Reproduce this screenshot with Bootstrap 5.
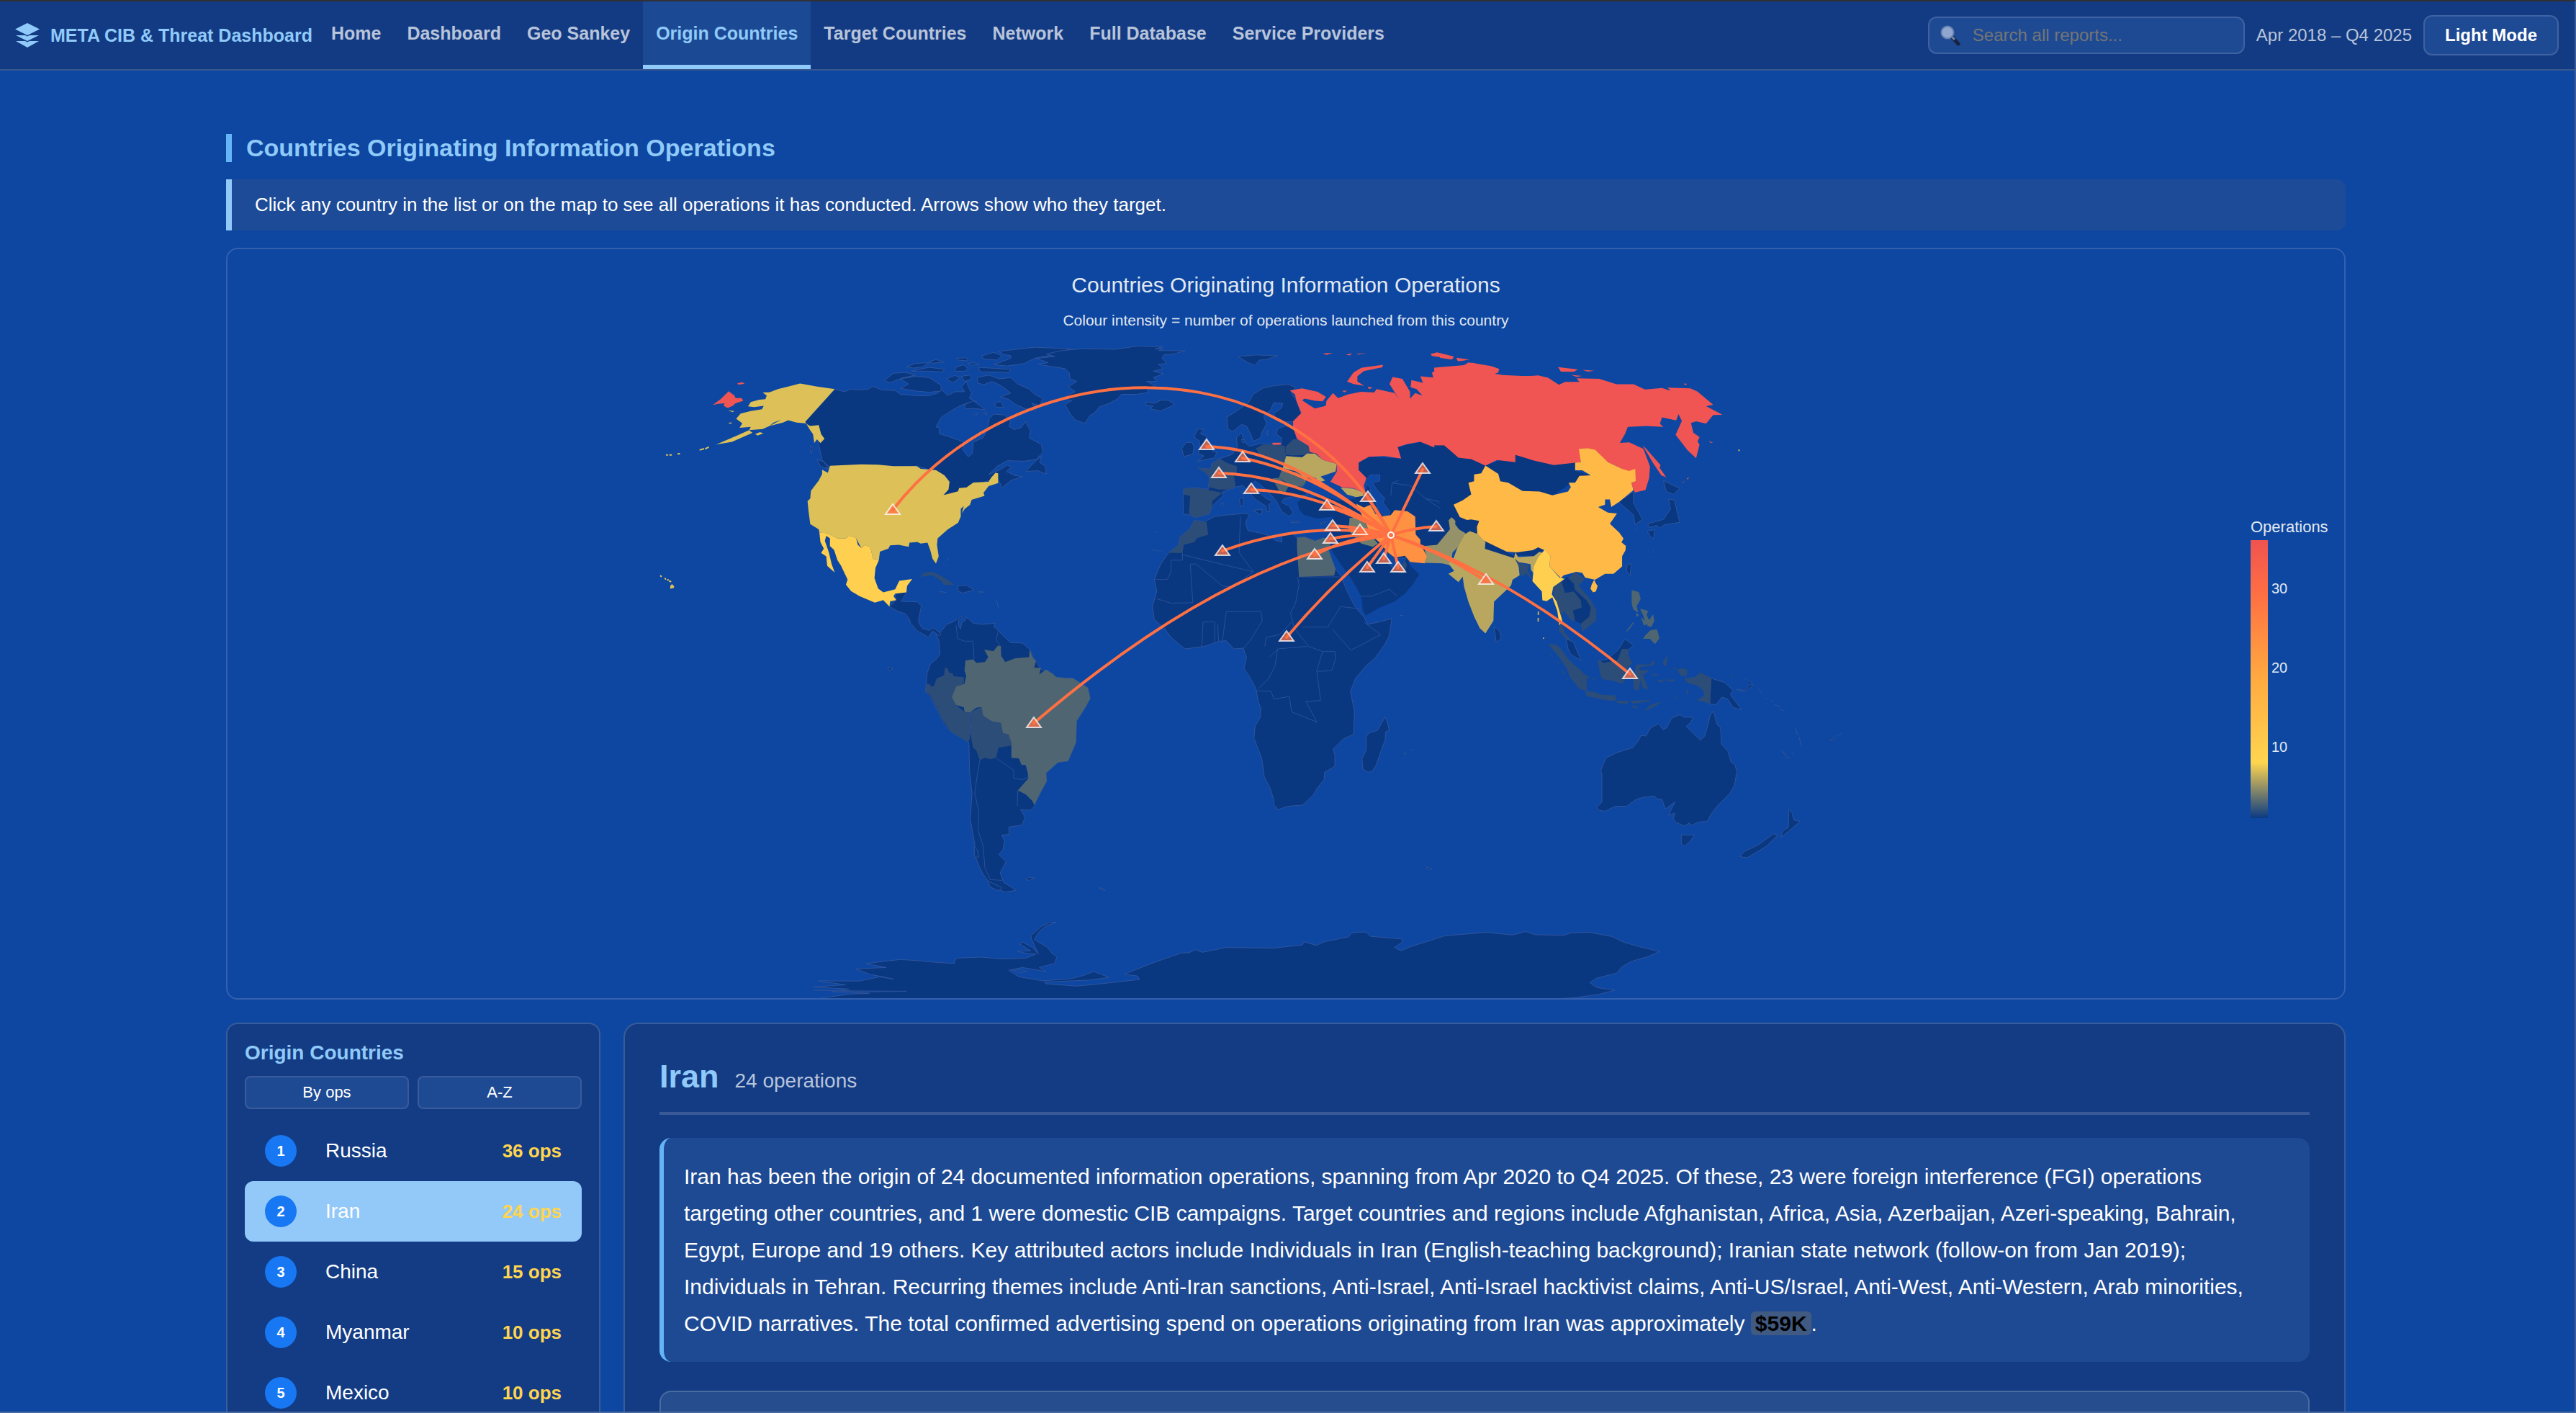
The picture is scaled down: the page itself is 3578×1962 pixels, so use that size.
<!DOCTYPE html>
<html lang="en">
<head>
<meta charset="utf-8">
<meta name="viewport" content="width=device-width, initial-scale=1">
<title>META CIB &amp; Threat Dashboard</title>
<link rel="stylesheet" href="https://cdn.jsdelivr.net/npm/bootstrap@5.3.0/dist/css/bootstrap.min.css">
<style>
:root{--sky:#90caf9;--panel:#133c85;--field:#1e4a94;--line:rgba(255,255,255,.17);--gold:#ffd54f}
body{background:#0d47a1;color:#fff;font-family:"Liberation Sans",Arial,sans-serif;font-size:28px;line-height:32px}
.frame{height:100vh;overflow:hidden;border-top:2px solid #303036;border-right:2px solid #3c5c96;border-bottom:2px solid #4a6a9f}
.topbar{background:#133b83;border-bottom:2px solid #38568f;min-height:96px;padding:0 22px 0 20px;font-size:24px}
.brand{color:var(--sky);font-size:25px;font-weight:700;text-decoration:none;gap:14px;padding-right:8px}
.brand svg{width:36px;height:36px}
.tabs .nav-link{display:flex;align-items:center;height:94px;padding:0 18px;border-bottom:6px solid transparent;color:#b8c4da;font-size:25px;font-weight:700}
.tabs .nav-link:hover,.tabs .nav-link.active{color:var(--sky)}
.tabs .nav-link.active{background:#1c4994;border-bottom-color:var(--sky)}
.finder{background:var(--field);border:2px solid #3f62a2;border-radius:12px;width:440px;height:52px;padding:0 14px;gap:14px}
.finder svg{width:30px;height:30px;flex:none}
.finder input{background:none;border:0;outline:0;color:#fff;font-size:24px;width:100%;min-width:0}
.finder input::placeholder{color:#757575;opacity:1}
.period{color:#b8c4da}
.mode{background:var(--field);border:2px solid #3f62a2;border-radius:12px;color:#fff;height:56px;padding:0 28px;font-size:24px;font-weight:700;line-height:28px}
.page{padding:88px 32px 0 28px;overflow-y:auto;scrollbar-width:none}
.wrap{max-width:2944px;margin:0 auto}
.heading{border-left:8px solid #64b5f6;color:var(--sky);font-size:34px;line-height:39px;font-weight:700;padding-left:20px;margin:0 0 24px}
.hint{background:#1e4b97;border-left:8px solid var(--sky);border-radius:0 12px 12px 0;font-size:26px;line-height:31px;padding:20px 32px;margin:0 0 24px}
.mapbox{border:2px solid #3560ae;border-radius:16px;overflow:hidden;margin-bottom:32px}
.mapbox svg{display:block;width:100%;height:auto}
.mapbox text{font-family:"Liberation Sans",Arial,sans-serif;fill:#e2e8f2}
.mapbox path{vector-effect:non-scaling-stroke}
.land{fill:#093780;stroke:#2f559d;stroke-width:1}
.flat{fill:#093780}.border-lines{fill:none;stroke:#2a509a;stroke-width:1}
.sea{fill:#0d47a1;stroke:#2a509a;stroke-width:1}
.c1{fill:#2d4d79}.c2{fill:#4f6672}.c3{fill:#717c6d}.c4{fill:#959168}.c5{fill:#b9a760}.c6{fill:#ddc158}.c7{fill:#ffd04f}.c8{fill:#ffb946}.c9{fill:#ff9142}.c10{fill:#f15553}
.dots{fill:none;stroke-width:2;stroke-dasharray:5 4}
.specks{fill:none;stroke:#ddc158;stroke-width:2;stroke-linecap:round}
.flows{fill:none;stroke:#ff7043;stroke-width:4;stroke-linecap:round}
.pins{fill:#ff7043;fill-opacity:.75;stroke:#fff;stroke-opacity:.75;stroke-width:2}
.side{flex:0 0 520px;background:var(--panel);border:2px solid var(--line);border-radius:16px;padding:24px}
.side h2{color:var(--sky);font-size:28px;line-height:32px;font-weight:700;margin:0 0 16px}
.sorter{background:var(--field);border:2px solid #3a5b9c;border-radius:8px;color:#fff;height:46px;font-size:22px;line-height:24px;padding:0}
.rows{padding:0;margin:16px 0 0;list-style:none}
.rowlink{height:84px;padding:0 28px;border-radius:12px;color:#fff;text-decoration:none}
.rowlink.active{background:#92c9f9}
.rank{width:44px;height:44px;border-radius:50%;background:#1877f2;font-size:20px;font-weight:700;margin-right:40px;flex:none}
.count{color:var(--gold);font-size:26px;font-weight:700}
.detail{background:var(--panel);border:2px solid var(--line);border-radius:20px;padding:48px;min-width:0}
.titleline{border-bottom:4px solid #3a5a97;padding-bottom:24px;margin-bottom:32px;gap:22px}
.titleline h2{color:var(--sky);font-size:45px;line-height:50px;font-weight:700;margin:0}
.titleline span{color:#b8c4da}
.summary{background:#1e4a94;border-left:6px solid #64b5f6;border-radius:16px;font-size:30px;line-height:51px;padding:28px;margin:0 0 40px}
.spend{display:inline-block;line-height:33px;background:#415a81;border-radius:6px;padding:0 6px;color:#000}
.nextbox{background:#264d8d;border:2px solid #4a6ba1;border-radius:16px;height:240px}
</style>
<script src="https://cdn.jsdelivr.net/npm/bootstrap@5.3.0/dist/js/bootstrap.bundle.min.js"></script>
</head>
<body>
<div class="frame d-flex flex-column">
<header class="topbar d-flex align-items-center flex-shrink-0">
  <a class="brand d-flex align-items-center" href="#">
    <svg viewBox="0 0 36 36" aria-hidden="true"><path fill="#90caf9" d="M18 1 35 9.500 18 18 1 9.500zM2 18h13l3 1.500 3-1.500h13l-16 8zM2 26h13l3 1.500 3-1.500h13l-16 9z"/></svg>
    <span>META CIB &amp; Threat Dashboard</span>
  </a>
  <nav class="tabs nav flex-nowrap">
    <a class="nav-link" href="#">Home</a>
    <a class="nav-link" href="#">Dashboard</a>
    <a class="nav-link" href="#">Geo Sankey</a>
    <a class="nav-link active" href="#" aria-current="page">Origin Countries</a>
    <a class="nav-link" href="#">Target Countries</a>
    <a class="nav-link" href="#">Network</a>
    <a class="nav-link" href="#">Full Database</a>
    <a class="nav-link" href="#">Service Providers</a>
  </nav>
  <div class="d-flex align-items-center gap-3 ms-auto">
    <label class="finder d-flex align-items-center">
      <svg viewBox="0 0 30 30" aria-hidden="true"><path d="m18 18 8 9" stroke="#17233f" stroke-width="5" stroke-linecap="round"/><path d="m17 17 4 4" stroke="#6d86ae" stroke-width="3"/><circle cx="11" cy="11" r="8.500" fill="#90a6cf" stroke="#6480ae" stroke-width="2"/></svg>
      <input type="search" placeholder="Search all reports..." aria-label="Search all reports">
    </label>
    <span class="period text-nowrap">Apr 2018 – Q4 2025</span>
    <button class="mode text-nowrap" type="button">Light Mode</button>
  </div>
</header>
<main class="page flex-grow-1">
<div class="wrap">
  <h1 class="heading">Countries Originating Information Operations</h1>
  <p class="hint">Click any country in the list or on the map to see all operations it has conducted. Arrows show who they target.</p>
  <section class="mapbox">
  <svg viewBox="316 346 2940 1040" role="img" aria-label="World map of countries originating information operations">
    <defs><linearGradient id="scale" x1="0" y1="0" x2="0" y2="1"><stop offset="0" stop-color="#ef5350"/><stop offset=".2" stop-color="#ff7043"/><stop offset=".5" stop-color="#ffab40"/><stop offset=".8" stop-color="#ffd54f"/><stop offset="1" stop-color="#0b3a82"/></linearGradient></defs>

    <!-- South America and Antarctica -->
    <g transform="translate(1250 820) scale(.47194 .369898)">
      <path class="land" d="M105 160 120 155 137 128 160 115 180 98 184 102 172 112 172 130 178 145 182 120 192 112 195 100 205 110 215 122 240 127 262 125 280 122 276 135 290 150 300 165 325 195 360 197 382 220 392 250 400 265 415 295 460 325 510 330 553 365 560 405 545 440 520 490 518 570 495 640 465 645 430 685 432 715 415 755 395 810 385 825 355 822 368 850 360 880 320 888 322 915 300 918 308 940 303 975 290 990 312 1018 295 1060 305 1095 342 1125 310 1132 285 1120 265 1100 245 1065 235 1040 222 1000 220 950 207 860 212 760 205 680 203 570 150 530 130 500 90 400 75 380 78 340 80 310 90 275 105 260 118 240 115 190z"/>
      <path class="c1" d="M78 350 88 352 92 360 100 358 108 330 130 318 132 290 140 292 145 308 155 310 158 322 188 325 188 350 165 360 155 400 165 430 190 455 205 460 210 500 205 560 200 570 150 530 128 490 90 395 75 378zM205 457 240 437 245 470 270 488 297 497 303 535 320 540 328 555 328 582 290 590 283 628 265 633 250 628 235 637 225 600 215 590 208 540 210 490z"/>
      <path class="c2" d="M248 222 275 228 288 207 297 208 298 245 310 268 340 254 380 250 382 222 390 250 400 265 395 290 415 290 410 315 430 297 450 312 460 325 490 330 510 330 553 365 560 405 545 440 520 490 518 570 495 640 465 645 430 685 432 715 415 755 395 805 390 790 370 765 347 750 378 705 376 683 370 655 358 655 350 630 328 628 328 570 320 540 303 535 297 497 270 490 245 470 240 437 225 440 205 458 190 455 188 438 165 430 153 400 165 360 190 350 195 320 190 300 193 262 215 258 225 272 250 268 260 250z"/>
      <path class="border-lines" d="M235 637 228 690 220 760 232 830 230 900 245 960 250 1040 265 1085 300 1088M283 628 335 675 335 705 360 710 378 700M347 750 345 810M165 130 170 180 190 190 215 190 218 258M205 457 208 540M290 150 283 185 295 207"/>
      <path class="land" d="M1428 475 1436 500 1440 525 1430 530 1428 560 1400 660 1390 678 1378 682 1362 670 1360 630 1372 600 1372 550 1380 535 1405 525zM370 1085 382 1076 398 1080 378 1088zM585 1115 600 1120 604 1126 596 1124zM218 960 228 975 232 1000 220 1002zM258 1090 300 1115 290 1128 265 1112z"/>
      <path class="land" d="M-246 1533 -150 1515 -90 1512 -200 1506 -150 1496 -254 1488 -160 1480 -240 1465 -120 1466 -60 1450 -20 1458 -90 1440 -130 1420 -40 1415 -100 1400 0 1385 60 1390 100 1395 160 1400 165 1380 240 1376 300 1383 370 1380 400 1365 375 1362 345 1355 385 1352 350 1325 362 1320 390 1340 408 1365 388 1310 385 1295 400 1280 415 1262 440 1245 460 1245 430 1258 410 1280 395 1310 435 1340 448 1362 462 1375 455 1400 410 1415 430 1430 360 1415 320 1425 350 1450 420 1465 500 1458 540 1445 570 1430 615 1452 560 1462 425 1470 430 1476 520 1485 600 1475 705 1460 700 1447 660 1440 750 1395 830 1360 850 1360 870 1348 890 1358 960 1340 1100 1342 1185 1330 1188 1318 1225 1332 1250 1318 1320 1300 1330 1285 1350 1282 1372 1282 1385 1298 1478 1308 1478 1320 1455 1340 1475 1352 1500 1338 1545 1320 1604 1296 1727 1283 1803 1293 1841 1280 1870 1292 1954 1294 1975 1285 2030 1283 2096 1299 2130 1320 2177 1337 2235 1355 2200 1375 2153 1392 2125 1412 2110 1436 2050 1455 2030 1472 2050 1490 2104 1500 2060 1515 1983 1529 1920 1533z"/>
      <path class="sea" d="M330 1425 360 1424 375 1430 350 1436zM-253 1500-120 1503 20 1504-100 1507z"/>
    </g>

    <!-- North America and Greenland -->
    <g transform="translate(880 460) scale(.47194 .357143)">
      <path class="land" d="M592 225 620 235 640 225 662 228 690 225 705 214 730 228 770 230 785 245 830 250 870 250 895 240 905 225 925 250 945 235 975 235 965 215 980 195 985 215 995 240 988 260 1010 275 985 278 960 290 940 305 905 335 890 372 900 375 900 398 940 415 975 432 968 460 985 488 997 475 1000 430 1028 415 1040 385 1047 340 1060 322 1090 325 1110 345 1105 370 1120 382 1140 375 1153 352 1168 385 1165 415 1200 440 1205 470 1185 498 1150 505 1100 503 1070 525 1045 557 1075 540 1100 520 1112 528 1098 545 1120 560 1145 565 1110 580 1085 608 1078 590 1070 570 1000 600 955 625 912 645 925 580 890 545 833 524 765 530 578 530 555 500 550 470 545 440 540 400 505 352zM1155 545 1175 515 1200 485 1195 510 1212 525 1215 555 1190 542zM540 498 560 508 575 535 550 525zM520 445 528 455 522 475z"/>
      <path class="land" d="M738 192 765 163 800 160 830 170 790 182 755 200zM785 185 830 175 870 180 905 210 905 232 870 237 830 232 785 222 810 205zM1012 180 1045 170 1075 185 1110 180 1130 205 1165 225 1180 245 1205 262 1195 288 1172 280 1185 310 1155 302 1125 285 1105 265 1080 255 1110 240 1080 210 1055 195 1030 208 1012 200zM975 285 1000 270 1020 290 1035 305 1000 300 975 302zM1075 78 1180 62 1285 68 1240 90 1180 105 1150 125 1100 135 1060 130 1110 105 1110 95 1090 90zM1025 95 1060 82 1085 95 1070 112 1030 108zM1015 140 1110 148 1105 160 1020 158zM803 138 830 125 870 122 850 138 825 143zM818 155 870 140 915 148 910 158 860 155zM870 118 890 110 915 120 880 124zM950 105 980 103 985 115 955 112zM985 125 1000 122 1018 128 990 132zM950 140 970 130 985 145 975 155 945 155zM920 185 945 172 962 180 940 200zM965 175 990 170 995 185 975 195zM1062 280 1080 272 1090 295 1068 295zM1003 320 1015 318 1005 328zM1030 318 1038 312 1040 325z"/>
      <path class="land" d="M1185 105 1240 98 1215 88 1260 75 1320 68 1420 70 1480 58 1560 60 1535 68 1558 68 1545 75 1623 76 1590 88 1560 92 1555 105 1570 125 1545 128 1558 145 1530 155 1560 165 1530 180 1540 195 1510 195 1535 212 1510 222 1515 238 1480 245 1435 245 1425 262 1400 280 1370 295 1355 320 1345 325 1328 358 1300 345 1285 320 1270 285 1290 270 1265 262 1275 250 1300 235 1280 215 1305 195 1285 185 1282 160 1270 145 1235 138 1190 128 1220 122z"/>
      <path class="c6" d="M592 225 540 215 490 203 455 215 425 225 400 237 380 238 392 250 388 264 370 266 345 275 337 292 355 295 383 290 378 303 345 310 315 320 302 340 320 358 312 375 345 372 340 384 380 380 400 368 412 355 435 344 400 368 440 355 455 346 480 355 505 358 520 368 545 365 552 400 562 418 550 435 540 420 532 434 528 400 520 385 505 352zM340 384 300 408 270 425 243 440 290 430 320 412 350 395zM358 400 372 392 382 397 365 405zM278 308 296 310 292 314zM278 356 290 354 286 360zM108 990 113 983 120 992 118 998 108 1001z"/>
      <path class="specks" d="M196 461 206 457M212 456 220 451M131 477 135 476M107 481 111 481M97 481 100 481M80 951 81 953M93 961 94 963M100 967 102 967M106 971 109 973"/>
      <path class="c10" d="M280 233 297 250 300 260 318 260 323 270 300 280 292 290 277 298 265 290 268 280 248 282 232 287 255 265zM305 203 318 198 327 202 320 206 308 207z"/>
      <path class="land" d="M753 1070 773 1045 770 1022 800 1005 802 1018 788 1050 835 1052 847 1068 842 1100 838 1130 850 1155 870 1163 882 1153 905 1175 900 1185 880 1165 868 1190 835 1165 815 1135 812 1120 800 1098 780 1090z"/>
      <path class="c6" d="M555 538 572 550 578 523 670 517 720 519 765 524 833 524 845 535 890 540 915 560 930 585 927 615 912 637 955 622 958 610 980 607 1000 588 1045 585 1052 570 1065 550 1073 552 1073 590 1045 602 1030 628 1033 640 995 655 990 675 975 690 966 708 972 680 963 690 963 720 955 745 925 770 895 805 893 830 898 875 890 903 880 885 873 850 865 822 845 825 835 819 812 822 810 838 780 830 755 832 750 845 725 857 722 890 705 885 697 840 682 830 670 842 655 805 645 797 632 798 625 805 600 805 570 785 547 783 545 770 520 750 515 700 512 660 520 650 522 620 545 580 555 555z"/>
      <path class="c7" d="M547 783 570 785 600 805 625 805 632 798 645 797 655 805 660 830 670 842 682 830 697 840 705 885 722 890 712 920 709 960 720 1000 735 1015 770 1003 782 970 820 963 805 990 803 1015 770 1020 765 1030 773 1045 755 1050 753 1070 735 1045 710 1055 665 1030 640 1010 625 985 630 965 610 910 600 890 590 850 578 835 578 805 567 795 563 815 575 860 583 905 592 938 570 912 567 875 552 862 560 845 550 820z"/>
      <path class="c1" d="M843 955 855 938 880 935 910 955 945 985 915 987 905 970 880 948z"/>
      <path class="land" d="M955 990 980 988 1002 1005 970 1018 955 1010zM902 1012 920 1015 910 1018zM1014 1011 1030 1014 1016 1017zM748 1305 763 1312 752 1320zM925 880 927 890M912 905 917 912M1068 1045 1074 1075"/>
    </g>

    <!-- Africa and western Eurasia -->
    <g transform="translate(1580 460) scale(.357143)">
      <path class="land" d="M989 1117 940 1130 895 1140 880 1110 845 1070 815 1010 790 950 770 925 735 840 722 803 700 815 650 800 620 802 600 785 575 785 560 800 562 820 535 812 515 795 480 785 430 775 420 745 435 712 420 708 340 715 300 720 260 740 220 735 205 765 165 800 160 830 120 862 90 905 65 965 75 1010 58 1070 65 1120 105 1155 130 1190 185 1235 260 1225 320 1205 345 1203 375 1235 411 1232 424 1267 414 1310 440 1350 461 1391 470 1440 479 1464 478 1500 457 1536 453 1583 483 1660 493 1733 515 1775 530 1821 530 1840 547 1860 582 1847 642 1842 682 1805 700 1775 725 1743 728 1714 767 1692 768 1650 761 1624 800 1585 840 1567 844 1479 828 1402 847 1350 885 1305 926 1267 960 1220 979 1184z"/>
      <path class="border-lines" d="M175 862 175 890 130 890 130 935 115 965 65 965M180 870 450 935M205 905 215 1055 130 1057 75 1040M205 905 228 905 330 990 370 995 450 935 395 860 400 720M622 955 628 985 615 1055 595 1095 610 1155 665 1225 720 1245 697 1320 712 1435 655 1440 698 1520 600 1480 590 1420 530 1430 520 1400 461 1398M628 955 785 955M250 1225 255 1130 300 1130 300 1210M312 1140 315 1205M330 1205 345 1090 480 1090 485 1125 440 1200 410 1235M495 1225 500 1190 550 1180 600 1130M515 1265 545 1235 600 1230 660 1225M545 1235 535 1300 510 1350 470 1390M720 1245 768 1245 770 1275 755 1320 700 1322M640 1150 740 1150 790 1070 870 1080M760 1160 830 1240 945 1180 880 1130M870 1030 910 1030 980 1003 1010 1030"/>
      <path class="c1" d="M220 735 268 742 275 790 230 805 222 820 180 830 175 862 122 862 160 830 165 800 205 765z"/>
      <path class="c2" d="M620 802 650 800 690 815 722 803 745 805 752 845 740 842 770 925 765 950 628 955 620 840z"/>
      <path class="land" d="M347 335 400 300 430 280 450 245 490 220 530 212 585 206 615 218 598 240 618 270 637 320 605 352 570 352 540 345 530 320 560 298 565 280 530 278 518 305 490 330 502 360 485 390 478 415 450 428 440 400 425 370 405 362 370 390 352 380zM235 532 285 535 288 515 320 495 370 478 388 450 385 412 405 395 415 430 435 447 475 437 525 440 560 440 560 415 540 400 545 378 575 368 605 375 670 460 750 500 775 515 765 545 730 560 690 560 660 575 650 590 640 615 665 635 620 640 570 650 560 665 590 680 605 705 590 720 560 700 540 660 510 625 470 590 455 582 445 595 465 620 500 650 524 662 510 675 514 700 503 700 500 680 460 655 430 620 410 600 385 605 330 625 332 640 290 680 280 710 225 725 205 715 178 710 177 640 180 612 230 608 275 615 280 570 265 550z"/>
      <path class="land" d="M222 405 235 380 257 382 245 398 270 408 260 428 278 445 290 465 308 470 300 492 232 505 258 485 235 475 245 455 240 425 225 418zM172 455 190 432 212 432 220 448 215 478 180 487zM30 275 65 280 90 268 120 268 145 285 90 310 50 302 60 290 35 288zM390 98 460 92 545 95 500 110 475 112 455 132 430 122zM450 697 485 692 482 714zM397 652 412 645 410 680 400 682zM404 625 410 618 412 638zM595 738 632 740 630 745 597 743zM708 748 734 740 722 752zM322 672 338 668 330 678zM503 395 508 385 506 405zM404 420 418 422 410 435z"/>
      <path class="c1" d="M235 532 285 535 290 515 320 495 345 510 387 525 385 550 375 562 382 605 350 615 315 615 275 605 280 570 265 550zM180 612 230 608 330 628 290 660 290 680 280 710 225 725 200 710 205 640 178 635zM460 455 485 442 525 440 572 445 578 490 568 515 520 490 475 482zM575 450 605 420 650 420 675 460 665 480 600 483 578 480z"/>
      <path class="c2" d="M550 570 560 540 640 550 655 585 640 605 600 600zM525 572 550 570 590 600 575 625 550 620z"/>
      <path class="c5" d="M578 485 640 490 660 475 690 475 720 500 775 515 770 545 740 555 712 565 730 580 700 588 695 572 672 562 650 582 640 560 620 545 565 532z"/>
      <path class="flat" d="M622 665 640 650 660 652 720 640 780 658 850 650 840 625 790 610 885 625 895 600 880 560 860 540 860 510 900 488 1025 495 1010 450 1100 430 1190 445 1350 522 1500 480 1568 500 1568 620 1330 740 1320 800 1260 790 1115 900 1050 890 1060 910 1095 945 1070 985 1040 1020 1000 1050 940 1075 888 1105 876 1085 870 1030 830 960 790 905 752 848 750 800 755 770 755 722 700 728 650 715 630 695z"/>
      <path class="border-lines" d="M985 640 990 590 1060 600 1120 650 1180 665 1200 620 1290 620M990 590 1015 580M1120 650 1180 690M1170 670 1235 675M870 1030 910 1030 980 1003 1010 1030"/>
      <path class="sea" d="M885 585 905 558 943 558 942 582 915 588 930 615 962 650 955 665 980 700 978 718 955 715 935 690 920 645 908 640 905 610zM930 830 950 850 975 862 1000 885 1045 880 1030 910 1010 930 975 905 950 870z"/>
      <path class="c3" d="M825 725 860 725 885 745 905 790 935 825 915 838 870 825 820 775z"/>
      <path class="c5" d="M790 608 840 612 875 625 880 640 850 645 815 635z"/>
      <path class="c1" d="M995 935 1020 928 1040 890 1048 910 1035 942z"/>
      <path class="c10" d="M592 230 640 222 700 235 733 255 720 272 690 270 650 262 640 268 665 285 690 300 732 290 735 270 760 240 780 260 820 245 870 235 920 238 930 225 1000 240 1018 265 980 205 992 178 1030 185 1045 210 1060 235 1060 262 1080 240 1108 250 1085 225 1062 218 1065 190 1110 200 1100 175 1150 180 1145 160 1200 138 1270 135 1300 122 1400 145 1390 165 1420 170 1568 177 1568 503 1520 500 1468 480 1465 508 1400 500 1350 522 1310 490 1255 490 1190 443 1155 452 1100 430 1050 438 1012 450 1025 495 960 485 900 488 860 510 860 540 890 570 880 600 888 632 840 610 800 608 750 585 775 545 775 515 720 500 695 475 670 470 665 445 620 418 605 375 605 350 637 318 618 270 612 245zM815 195 840 160 870 142 955 130 952 140 880 155 855 175 855 195 882 212 840 205zM525 433 557 433 557 441 525 441zM1140 88 1165 82 1230 98 1225 108 1190 103 1145 96zM1240 105 1290 110 1245 115zM720 86 760 84 735 92zM810 90 835 86 825 94zM850 88 890 84 860 90zM895 215 915 220 900 225zM795 232 815 230 805 237z"/>
      <path class="c9" d="M850 670 880 685 905 675 925 710 950 720 985 715 1000 695 1050 700 1080 720 1082 790 1100 810 1100 830 1130 880 1118 902 1060 897 1040 873 1000 880 975 860 940 820 905 790 885 740z"/>
      <path class="c4" d="M1210 735 1225 718 1240 720 1235 750 1250 770 1275 785 1270 815 1225 860 1218 910 1185 902 1115 900 1125 875 1112 835 1165 830 1190 800 1215 770z"/>
      <path class="border-lines" d="M1020 1104 1032 1105M65 780 75 783M55 850 100 855"/>
    </g>

    <!-- Eastern Asia and the islands -->
    <g transform="translate(2000 460) scale(.395408 .408163)">
      <path class="flat" d="M-20 388 15 388 70 430 160 457 265 420 400 455 475 445 475 475 530 490 455 520 395 560 200 560 140 650 132 700 80 680 50 640 0 600zM155 715 180 722 260 765 260 752 330 745 345 735 365 742 340 765 280 762 260 775 200 762 158 740z"/>
      <path class="land" d="M628 580 680 545 680 585 712 640 685 658 680 625 645 595zM785 508 843 535 820 555 795 545zM803 570 825 575 832 610 843 650 790 658 770 670 762 660 735 668 730 655 785 640 810 605zM728 680 755 675 750 707 738 695zM658 795 672 790 668 832 656 815zM190 1005 210 1020 215 1045 198 1058z"/>
      <path class="c10" d="M-20 124 85 115 100 106 180 118 208 128 205 140 170 152 320 152 345 150 380 158 418 182 440 172 490 172 480 160 560 162 620 180 680 180 720 198 780 193 810 202 800 192 880 194 905 205 960 250 935 255 993 284 960 285 935 314 900 306 882 312 890 345 912 360 905 375 912 385 900 432 870 405 828 352 850 305 838 282 830 303 780 293 773 315 785 325 725 322 660 325 650 350 632 380 665 378 715 400 738 460 735 500 722 540 685 548 670 515 688 510 640 468 590 445 540 403 490 400 495 445 475 447 400 455 330 440 265 420 265 445 200 438 160 457 110 435 65 430 15 388-20 388zM712 388 725 400 775 455 772 465 795 497 778 490 750 450zM415 122 485 130 470 138 425 137zM500 131 543 134 520 137zM460 148 500 152 480 155zM855 178 868 178 864 183zM848 520 862 507 855 512zM867 500 875 498 870 505zM945 373 960 380 950 379zM0 75 45 88 40 96 0 90zM60 90 102 97 65 102z"/>
      <path class="c8" d="M160 457 205 485 212 510 240 515 290 543 350 545 395 558 450 545 460 530 452 515 475 515 490 492 530 490 500 473 475 473 475 447 495 445 488 400 520 398 545 403 590 445 640 468 665 475 686 468 688 510 672 515 680 540 630 580 602 598 597 572 580 572 580 590 556 598 590 617 622 620 597 655 630 685 645 705 638 718 653 730 652 745 640 765 640 800 610 825 580 825 545 845 510 838 500 822 480 818 435 830 425 840 385 800 388 765 368 745 345 735 325 745 270 752 235 750 160 715 132 700 130 665 138 645 110 640 95 642 70 632 48 590 80 575 110 555 100 515 120 510 120 487 145 483zM542 845 548 858 554 866 548 885 538 888 529 876 533 862z"/>
      <path class="c5" d="M60 740 88 690 105 680 135 690 160 718 158 740 260 772 265 752 275 768 330 765 350 750 362 755 345 790 335 830 320 812 318 792 275 785 280 830 255 845 250 865 190 920 188 985 160 1028 140 1010 120 970 100 920 85 870 80 835 65 853 30 825 50 815 30 790 45 780z"/>
      <path class="c1" d="M263 773 280 788 315 795 308 810 325 845 305 825 285 833 277 800z"/>
      <path class="c1" d="M398 870 415 850 440 850 475 818 510 842 488 865 530 915 550 950 548 985 500 1022 495 995 480 985 462 985 435 952 428 965 430 1000 438 1025 470 1062 445 1048 418 1020 420 985 415 940 400 900z"/>
      <path class="flat" d="M428 855 445 835 470 858 475 880 515 915 530 940 525 970 495 995 475 985 467 950 498 940 495 915 470 885 440 890z"/>
      <path class="c7" d="M368 743 388 765 385 800 420 838 438 842 398 870 393 895 410 920 430 985 420 1000 412 950 395 905 375 918 360 915 358 885 325 850 330 800 345 770z"/>
      <path class="land" d="M443 1045 470 1058 480 1085 497 1120 460 1100 450 1080zM560 1120 590 1115 625 1085 650 1047 680 1068 660 1085 640 1085 625 1120 575 1130zM952 1180 1000 1195 1030 1222 1020 1235 1060 1288 1030 1280 1010 1250 990 1245 970 1270 948 1268zM1042 1218 1070 1222 1092 1200 1098 1206 1070 1227zM1068 1180 1095 1195 1100 1205M1120 1218 1135 1235M1145 1248 1150 1252M1162 1255 1170 1262M1175 1270 1195 1278M1195 1285 1207 1292M1200 1425 1228 1452 1218 1448zM1248 1350 1256 1372M1262 1380 1270 1415M1370 1392 1385 1382 1388 1390zM1392 1378 1410 1368M1235 1430 1245 1442M983 953l4 2M738 772l5-4M748 745l4 3M685 673l8 2"/>
      <path class="c1" stroke="#2d4d79" d="M383 1065 400 1065 420 1075 450 1115 470 1135 490 1150 515 1175 515 1222 490 1215 460 1180 445 1145 425 1115zM512 1225 540 1228 570 1238 615 1240 618 1255 590 1255 515 1240zM555 1118 575 1130 600 1125 625 1120 640 1082 662 1082 662 1105 675 1130 660 1140 655 1175 640 1198 610 1188 570 1182 562 1155zM690 1135 735 1135 755 1120 750 1135 715 1140 700 1142 700 1155 735 1153 712 1170 730 1215 715 1215 705 1180 697 1220 683 1218 680 1185zM870 1195 860 1182 895 1178 915 1162 952 1180 948 1265 905 1255 930 1240 925 1220 905 1205zM835 1152 850 1147 868 1152 865 1172 845 1170zM620 1258 660 1258 658 1266 625 1264zM670 1258 740 1256 680 1266zM672 1272 695 1280 685 1282zM720 1290 740 1272 775 1262 745 1280zM765 1188 782 1186 780 1194zM790 1186 825 1186 820 1190zM820 1145 832 1148 822 1148zM865 1235 870 1218 870 1232zM825 1250 835 1242zM745 1166 765 1168 750 1170zM785 1125 798 1105 795 1135 788 1138zM430 1155 440 1168 432 1162zM442 1178 450 1185zM410 1122 418 1132zM388 1100 398 1108zM515 1170 525 1178 518 1182zM538 1180 545 1182 540 1186zM1020 1168 1028 1172z"/>
      <path class="c2" stroke="#4f6672" d="M675 882 698 888 704 910 690 935 695 955 680 945 675 925zM740 1018 762 1015 770 1045 755 1063 738 1045 715 1045 725 1032zM655 1022 680 990 665 1012zM705 945 730 952 725 965 735 985 748 965 752 985 742 1005 728 1000 735 990 718 1000 708 975 722 990 715 965zM690 960 698 965 692 970z"/>
      <path class="dots" stroke="#b9a760" d="M346 953 345 997M364 1042v4M1048 405h6"/>
    </g>

    <!-- Australia and New Zealand -->
    <g transform="translate(1900 800) scale(.446429 .382653)">
      <path class="land" d="M740 660 775 640 825 622 840 600 850 578 865 580 880 550 905 535 918 557 930 550 945 515 970 503 985 512 1012 512 1005 530 990 545 1010 568 1035 595 1048 580 1058 540 1065 505 1075 490 1087 540 1097 548 1100 610 1120 635 1130 675 1142 685 1148 710 1140 760 1125 790 1090 830 1070 860 1055 890 1030 892 1005 905 1000 895 985 907 958 893 950 880 955 860 935 868 955 820 925 845 915 810 900 808 890 798 860 802 835 810 805 835 770 835 738 853 720 850 712 838 728 820 728 720 725 705 733 680zM975 938 990 940 1015 938 1005 960 985 980 975 970zM1310 845 1320 860 1325 885 1345 890 1325 910 1285 948 1290 925 1308 912zM1262 935 1275 940 1240 980 1180 1022 1158 1018 1170 1000 1215 975zM182 1055 200 1062 188 1066zM112 642l7 2-4 4zM135 630l5 2zM100 143l10 0z"/>
    </g>

    <g class="flows">
      <path d="M1240 708C1410 490 1785 462 1932 743M1436 1004Q1710 770 1932 743M1676 620Q1796 623 1932 743M1726 636Q1840 660 1932 743M1693 657Q1808 660 1932 743M1738 680Q1835 683 1932 743M1843 703Q1890 718 1932 743M1900 691 1932 743M1976 652 1932 743M1995 731Q1962 733 1932 743M1851 730Q1892 732 1932 743M1848 748Q1890 740 1932 743M1889 738 1932 743M1826 771Q1872 745 1932 743M1698 765Q1815 722 1932 743M1899 788 1932 743M1922 776 1932 743M1942 788 1932 743M2064 807Q2005 768 1932 743M1787 885Q1852 808 1932 743M2264 936Q2092 795 1932 743"/>
    </g>
    <defs><path id="pin" d="M0-8 10 6H-10z"/></defs>
    <g class="pins">
      <use href="#pin" x="1240" y="708"/><use href="#pin" x="1436" y="1004"/><use href="#pin" x="1676" y="618"/><use href="#pin" x="1726" y="635"/><use href="#pin" x="1693" y="657"/><use href="#pin" x="1738" y="679"/><use href="#pin" x="1843" y="702"/><use href="#pin" x="1900" y="690"/><use href="#pin" x="1976" y="651"/><use href="#pin" x="1995" y="731"/><use href="#pin" x="1851" y="730"/><use href="#pin" x="1848" y="748"/><use href="#pin" x="1889" y="736"/><use href="#pin" x="1826" y="770"/><use href="#pin" x="1698" y="765"/><use href="#pin" x="1899" y="788"/><use href="#pin" x="1922" y="776"/><use href="#pin" x="1942" y="788"/><use href="#pin" x="2064" y="805"/><use href="#pin" x="1787" y="884"/><use href="#pin" x="2264" y="936"/>
    </g>
    <circle cx="1932" cy="743" r="4" fill="#ff7043" stroke="#fff" stroke-width="2"/>

    <text x="1786" y="406" font-size="30" text-anchor="middle">Countries Originating Information Operations</text>
    <text x="1786" y="452" font-size="21" text-anchor="middle">Colour intensity = number of operations launched from this country</text>
    <text x="3126" y="739" font-size="22">Operations</text>
    <rect x="3126" y="750" width="24" height="386" fill="url(#scale)"/>
    <text x="3155" y="824" font-size="20">30</text>
    <text x="3155" y="934" font-size="20">20</text>
    <text x="3155" y="1044" font-size="20">10</text>
  </svg>
  </section>

  <div class="d-flex align-items-start" style="gap:32px">
    <aside class="side">
      <h2>Origin Countries</h2>
      <div class="d-flex" style="gap:12px">
        <button class="sorter flex-fill w-50" type="button">By ops</button>
        <button class="sorter flex-fill w-50" type="button">A-Z</button>
      </div>
      <ul class="rows">
        <li><a class="rowlink d-flex align-items-center" href="#"><span class="rank d-flex align-items-center justify-content-center">1</span><span>Russia</span><span class="count ms-auto">36 ops</span></a></li>
        <li><a class="rowlink active d-flex align-items-center" href="#"><span class="rank d-flex align-items-center justify-content-center">2</span><span>Iran</span><span class="count ms-auto">24 ops</span></a></li>
        <li><a class="rowlink d-flex align-items-center" href="#"><span class="rank d-flex align-items-center justify-content-center">3</span><span>China</span><span class="count ms-auto">15 ops</span></a></li>
        <li><a class="rowlink d-flex align-items-center" href="#"><span class="rank d-flex align-items-center justify-content-center">4</span><span>Myanmar</span><span class="count ms-auto">10 ops</span></a></li>
        <li><a class="rowlink d-flex align-items-center" href="#"><span class="rank d-flex align-items-center justify-content-center">5</span><span>Mexico</span><span class="count ms-auto">10 ops</span></a></li>
      </ul>
    </aside>
    <article class="detail flex-grow-1">
      <div class="titleline d-flex align-items-baseline"><h2>Iran</h2><span>24 operations</span></div>
      <p class="summary">Iran has been the origin of 24 documented information operations, spanning from Apr 2020 to Q4 2025. Of these, 23 were foreign interference (FGI) operations targeting other countries, and 1 were domestic CIB campaigns. Target countries and regions include Afghanistan, Africa, Asia, Azerbaijan, Azeri-speaking, Bahrain, Egypt, Europe and 19 others. Key attributed actors include Individuals in Iran (English-teaching background); Iranian state network (follow-on from Jan 2019); Individuals in Tehran. Recurring themes include Anti-Iran sanctions, Anti-Israel, Anti-Israel hacktivist claims, Anti-US/Israel, Anti-West, Anti-Western, Arab minorities, COVID narratives. The total confirmed advertising spend on operations originating from Iran was approximately <strong class="spend">$59K</strong>.</p>
      <div class="nextbox"></div>
    </article>
  </div>
</div>
</main>
</div>
</body>
</html>
